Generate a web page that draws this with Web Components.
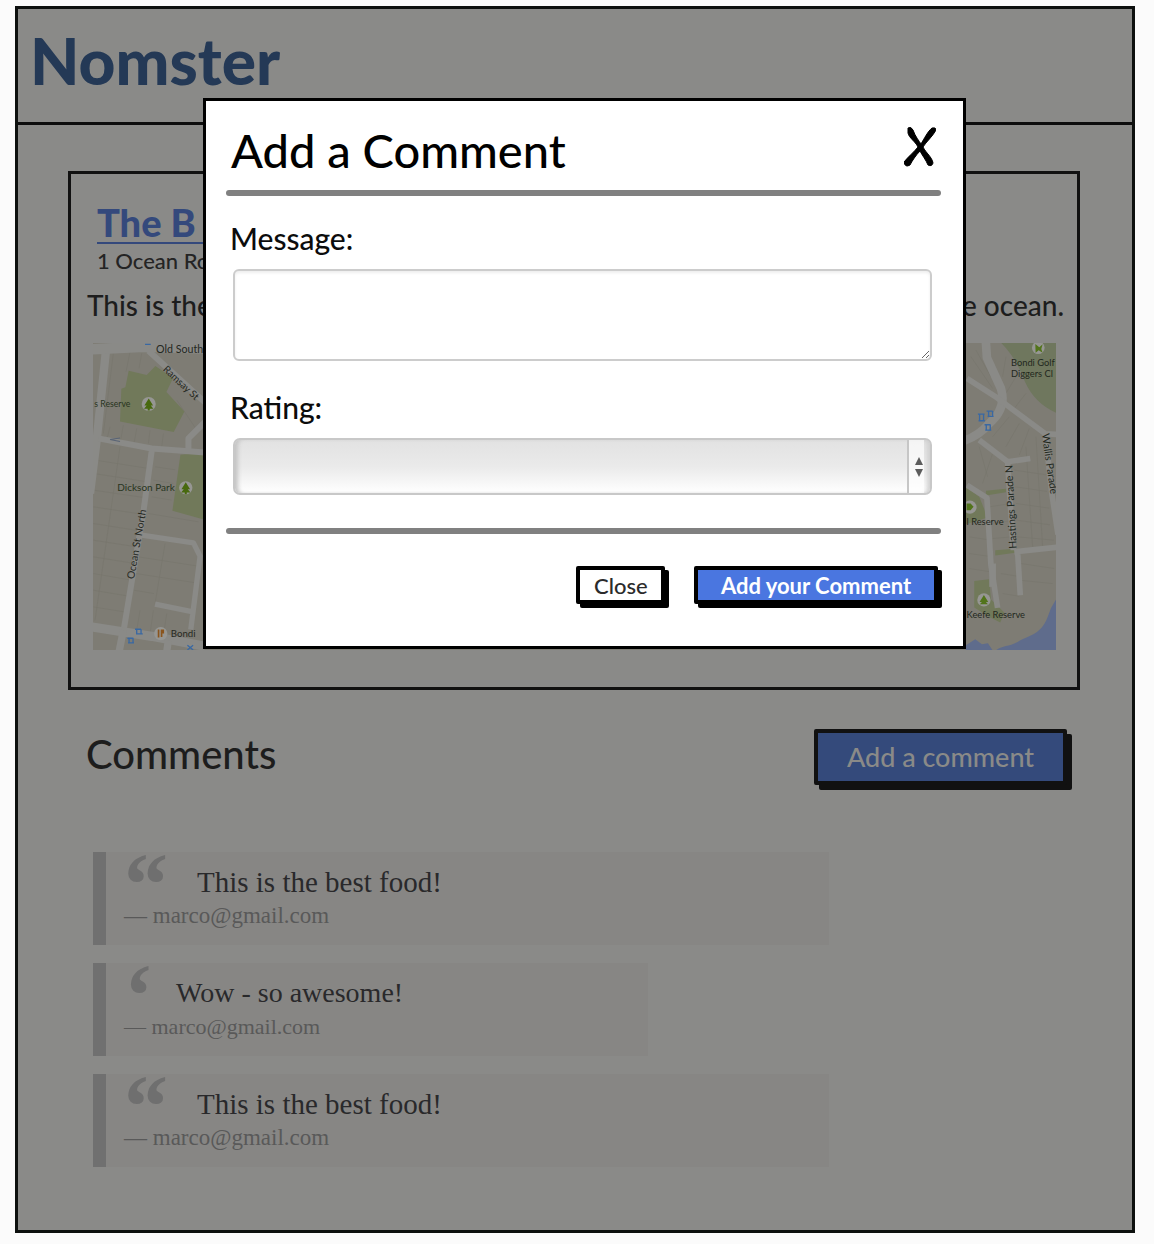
<!DOCTYPE html>
<html lang="en">
<head>
<meta charset="utf-8">
<title>Nomster</title>
<style>
body { margin: 0; padding: 6px 19px 12px 15px; background: #fbfbfb; font-family: Lato, "Open Sans", sans-serif; color: #1d1d1d; }
</style>
</head>
<body>
<nomster-page>
  <place-card slot="main"></place-card>
  <comment-list slot="main">
    <user-comment mark="“" author="marco@gmail.com">This is the best food!</user-comment>
    <user-comment mark="‘" author="marco@gmail.com" short>Wow - so awesome!</user-comment>
    <user-comment mark="“" author="marco@gmail.com">This is the best food!</user-comment>
  </comment-list>
  <comment-dialog slot="dialog"></comment-dialog>
</nomster-page>

<script>
const define = (name, html, setup) => {
  const template = document.createElement('template');
  template.innerHTML = '<style>*{box-sizing:border-box}</style>' + html;
  customElements.define(name, class extends HTMLElement {
    constructor() {
      super();
      this.attachShadow({ mode: 'open' }).append(template.content.cloneNode(true));
    }
    connectedCallback() { if (setup) setup(this, this.shadowRoot); }
  });
};

define('nomster-page', `
<style>
:host { display: block; position: relative; box-sizing: border-box; border: 3px solid #0d100e; background: #8a8a88; }
header { height: 116px; border-bottom: 3px solid #0d0d0d; padding: 12px 12px 0; }
h1 { margin: 0; font-size: 64px; line-height: 80px; font-weight: 900; color: #243956; }
main { padding: 46px 52px 63px 50px; }
.overlay { position: absolute; inset: 0; padding: 89px 166px 0 185px; }
</style>
<header><h1>Nomster</h1></header>
<main><slot name="main"></slot></main>
<div class="overlay"><slot name="dialog"></slot></div>`);

define('sketch-button', `
<style>
:host { display: inline-block; }
button { display: block; width: 100%; height: 38px; margin: 0; padding: 2px 14px 0; border: 4px solid #000; border-radius: 2px; background: #fff; color: #2b2b2b; font: 500 22px/28px Lato, sans-serif; box-shadow: 4px 4px 0 #000; white-space: nowrap; cursor: pointer; }
:host([kind="primary"]) button { background: #4a76e0; color: #fff; font-weight: 700; }
:host([kind="muted"]) button { height: 56px; padding: 0 14px; border-color: #111; box-shadow: 5px 5px 0 #111; background: #344a7b; color: #8a8a88; font-size: 27px; }
</style>
<button type="button"><slot></slot></button>`);

define('place-card', `
<style>
:host { display: block; box-sizing: border-box; border: 3px solid #111; padding: 28px 13px 37px 16px; }
.name { padding: 0 10px; }
h2 { margin: 0; font-size: 38px; line-height: 40px; font-weight: 900; }
a { display: inline-block; color: #34497c; text-decoration: none; border-bottom: 2px solid #34497c; padding-right: 16px; }
address { font-style: normal; font-size: 22px; line-height: 34px; color: #242424; font-weight: 500; }
.about { display: flex; justify-content: space-between; margin: 7px 0 18px; font-size: 28px; line-height: 40px; font-weight: 500; }
svg { display: block; width: calc(100% - 14px); height: auto; margin-left: 6px; font-family: Lato, sans-serif; }
</style>
<div class="name"><h2><a href="#place">The B</a></h2><address>1 Ocean Ro</address></div>
<div class="about"><span>This is the</span><span>the ocean.</span></div>
<svg viewBox="0 0 962 307" role="img" aria-label="Map">
  <rect width="962" height="307" fill="#7e7c74"/>
  <g transform="translate(-33 -13) scale(.3333)">
    <g stroke="#77756d" stroke-width="2" fill="none">
      <path d="M160 70l-30 240M210 65l-12 60M245 70l-8 45M105 390l160 25M100 430l155 24M100 480l150 22M100 530l145 22M100 580l138 22M100 630l130 20M100 680l125 20M100 730l115 20M100 780l108 18M100 830l100 16M180 350l-75 520M285 410l60 9M280 450l60 10M275 500l60 10M265 550l150 25M235 680l180 28M228 730l180 28M222 780l60 10M315 640l-30 180M150 290l-10 40M190 285l-8 45M230 295l-8 45M270 300l-5 40M310 310l-5 40M350 210l60 90M240 840l-10 60M280 840l-10 70M320 850l-12 80"/>
    </g>
    <path d="M206 122l54 13 26-27 53 36-20 42 54 58-32 62-161-32 4-98 12-4z" fill="#71795a"/>
    <path d="M361 374l70-6v200l-94-26z" fill="#71795a"/>
    <g stroke="#8a8a87" fill="none" stroke-width="22" stroke-linejoin="round">
      <path d="M138 60l-28 270-20 160" stroke-width="25"/>
      <path d="M95 58l160-8 180 5" stroke-width="32"/>
      <path d="M265 62l175 160M440 270l-55 55v40M115 325l160 30 160 12M276 355l-26 190-60 360" stroke-width="18"/>
      <path d="M245 615l155 23 20 40-28 220M285 822l110 22" stroke-width="16"/>
      <path d="M95 890l180 28 160 30" stroke-width="28"/>
      <path d="M190 900l-14 70M325 930l-6 40"/>
    </g>
    <g fill="#969693"><circle cx="266" cy="222" r="21"/><circle cx="377" cy="473" r="20"/><circle cx="302" cy="910" r="20"/></g>
    <path d="M266 205l-13 21h7l-8 10h11v5h6v-5h11l-8-10h7zM377 456l-13 21h7l-8 10h11v5h6v-5h11l-8-10h7z" fill="#48690e"/>
    <path d="M293 898h5v24h-5zM302 898h10v12h-5v10h-5z" fill="#8a541d"/>
    <path d="M255 43h17M225 897h18m-15 14h20m-18-14v14m13-14v14M202 924h18m-16 14h18m-15-14v14m12-14v14M382 945l17 14m-17 0l17-14" stroke="#3968a3" stroke-width="4"/>
    <path d="M150 328l30-4m-30 4l30 6" stroke="#596475" stroke-width="3"/>
    <g fill="#25281f" font-size="27">
      <text x="288" y="68" font-size="32">Old South</text>
      <text transform="translate(307 120) rotate(43)" font-size="30">Ramsay St</text>
      <text x="103" y="232" font-size="26" fill="#273420">s Reserve</text>
      <text x="172" y="483" font-size="30" fill="#273420">Dickson Park</text>
      <text transform="translate(222 748) rotate(-80)" font-size="31">Ocean St North</text>
      <text x="332" y="920" font-size="29">Bondi</text>
    </g>
  </g>
  <g transform="translate(862 -13) scale(.3333)">
    <path d="M135 38h170v212q-68-28-98-95-25-70-72-117z" fill="#6f775e"/>
    <path d="M30 470l40 30 25 62-65 20zM55 752l45-5 5 60 40 40-12 30-30-15-48-30zM90 482l60-6v10l-60 10zM118 660l60-4v12l-60 8z" fill="#71795a"/>
    <path d="M302 805q-18 25-27 55c-20 55-60 55-90 75-28 15-45 10-65 25h182zM30 945l28-18 20 15 18-3 14 21H30z" fill="#5f6c8c"/>
    <g stroke="#77756d" stroke-width="2" fill="none"><path d="M45 80l65 95M60 60l45 80M150 80l-10 60M180 140l-30 50M210 190l-35 45M160 260l-50 60M190 280l-40 70M220 295l-30 80M175 420l95 14M178 470l95 14M180 520l100 14M182 570l100 14M184 620l110 10M210 350l20 300M240 320l20 330M70 350l25 90M110 370l-30 90M100 530l65-10M105 580l60-8M110 625l60-5M195 700l100 15M190 750l100 10M40 620l65 10M40 670l70 10M40 715l65 10M135 730l50 8M140 790l50 8"/></g>
    <g stroke="#8a8a87" fill="none" stroke-width="17" stroke-linejoin="round">
      <path d="M90 38l3 45 42 92q18 60-35 105-28 35-75 52" stroke-width="26"/>
      <path d="M33 145l90 58 145 108 35 2M70 330l85 65 68-10M33 465l60 38 12 200 20 130M175 665l128-14M185 665l8 130M155 395l17 265M268 313l20 180 18 120"/>
      <path d="M110 700v70" stroke-width="20"/>
    </g>
    <g fill="#969693"><circle cx="247" cy="53" r="19"/><circle cx="42" cy="531" r="20"/><circle cx="84" cy="809" r="20"/></g>
    <path d="M238 42l12 10 10-9-4 14 4 11-12-7-9 7zM32 520h12l9 10-9 10H32zM84 794l-13 21h7l-6 7h24l-6-7h7z" fill="#52741b"/>
    <path d="M66 252h20m-18 20h19m-16-20v20m12-20v20M92 243h18m-15 16h18m-15-16v16m12-16v16M86 284h18m-16 16h18m-15-16v16m12-16v16" stroke="#3968a3" stroke-width="4"/>
    <g fill="#22281d" font-size="28">
      <text x="165" y="107">Bondi Golf</text>
      <text x="165" y="142">Diggers Cl</text>
      <text transform="translate(258 312) rotate(82)" font-size="31">Wallis Parade</text>
      <text transform="translate(182 655) rotate(-93)" font-size="31">Hastings Parade N</text>
      <text x="32" y="585">l Reserve</text>
      <text x="32" y="863">Keefe Reserve</text>
    </g>
  </g>
</svg>`);

define('comment-list', `
<style>
:host { display: block; }
.top { display: flex; justify-content: space-between; align-items: flex-start; padding: 39px 13px 67px 18px; }
h2 { margin: 0; font-size: 40px; line-height: 50px; font-weight: 500; }
sketch-button { width: 253px; }
.list { display: flex; flex-direction: column; gap: 18px; padding: 0 251px 0 25px; }
</style>
<div class="top"><h2>Comments</h2><sketch-button kind="muted">Add a comment</sketch-button></div>
<div class="list"><slot></slot></div>`);

define('user-comment', `
<style>
:host { display: block; box-sizing: border-box; height: 93px; border-left: 13px solid #707070; background: #878684; font-family: "Liberation Serif", serif; }
:host([short]) { width: 555px; max-width: 100%; }
blockquote { display: grid; grid-template-columns: 73px 1fr; margin: 0; padding: 10px 18px; }
p { margin: 0; font-size: 29px; line-height: 40px; color: #29292b; }
:host([short]) p { font-size: 28px; }
.mark { height: 40px; font-size: 88px; font-weight: 700; line-height: 46px; color: #6f6f6f; }
:host([short]) blockquote { grid-template-columns: 52px 1fr; }
footer { grid-column: 1 / -1; font-size: 23px; line-height: 28px; color: #595959; }
:host([short]) footer { font-size: 22px; }
</style>
<blockquote><span class="mark" aria-hidden="true"></span><p><slot></slot></p><footer></footer></blockquote>`,
(el, root) => {
  root.querySelector('.mark').textContent = el.getAttribute('mark');
  root.querySelector('footer').textContent = '— ' + el.getAttribute('author');
});

define('comment-dialog', `
<style>
:host { display: block; box-sizing: border-box; border: 3px solid #000; background: #fff; color: #0c0c0c; padding: 0 22px 42px 20px; }
header { display: flex; justify-content: space-between; align-items: center; height: 89px; padding: 8px 5px 0; }
h2 { margin: 0; font-size: 47px; line-height: 60px; font-weight: 500; color: #000; }
.x { width: 32px; height: 42px; padding: 0; border: 0; background: none; cursor: pointer; margin-bottom: 6px; }
.x svg { display: block; }
hr { height: 6px; margin: 0; border: 0; border-radius: 3px; background: #808080; }
form { display: flex; flex-direction: column; padding: 24px 9px 33px 7px; }
label { padding-bottom: 13px; font-size: 30px; line-height: 36px; font-weight: 500; margin-left: -3px; }
textarea { display: block; width: 100%; height: 92px; margin: 0 0 28px; border: 2px solid #ccc; border-radius: 6px; box-shadow: inset 0 2px 3px #eee; resize: vertical; font: 24px/30px Lato, sans-serif; }
.select { position: relative; }
select { display: block; appearance: none; width: 100%; height: 57px; margin: 0; border: 2px solid #c8c8c8; border-radius: 7px; background: linear-gradient(#e2e2e2, #eaeaea 50%, #fff); box-shadow: inset 5px 0 4px -2px #c4c4c4, inset -5px 0 4px -2px #d0d0d0; font: 24px Lato, sans-serif; }
.select svg { position: absolute; right: 1px; top: 2px; height: 53px; pointer-events: none; }
.actions { display: flex; justify-content: flex-end; gap: 29px; padding: 32px 3px 0; }
.close { width: 89px; }
.add { width: 244px; }
</style>
<header><h2>Add a Comment</h2>
<button class="x" type="button" aria-label="Close dialog"><svg width="32" height="42" viewBox="0 0 32 42"><path d="M4 2Q7 0 9 4C11 10 15 15 17 18 20 13 24 5 28 2Q32 1 32 4C29 10 22 16 19 21 22 27 28 31 29 37Q28 41 24 39C22 34 18 29 16 25 12 29 8 35 6 39Q1 42 0 36C4 31 11 25 14 21 11 15 5 12 4 7Z" stroke="#000"/></svg></button></header>
<hr>
<form>
  <label for="message">Message:</label>
  <textarea id="message"></textarea>
  <label for="rating">Rating:</label>
  <div class="select"><select id="rating"><option></option></select>
    <svg width="24" height="53" viewBox="0 0 24 53" aria-hidden="true"><path d="M1 0h16v53H1z" fill="#fff" opacity=".65"/><path d="M1 0v53" stroke="#c6c6c6" stroke-width="2"/><path d="M12 17l-4 8h8zM12 37l-4-8h8z" fill="#5c5c5c"/></svg>
  </div>
</form>
<hr>
<div class="actions"><sketch-button class="close">Close</sketch-button><sketch-button class="add" kind="primary">Add your Comment</sketch-button></div>`);
</script>
</body>
</html>
